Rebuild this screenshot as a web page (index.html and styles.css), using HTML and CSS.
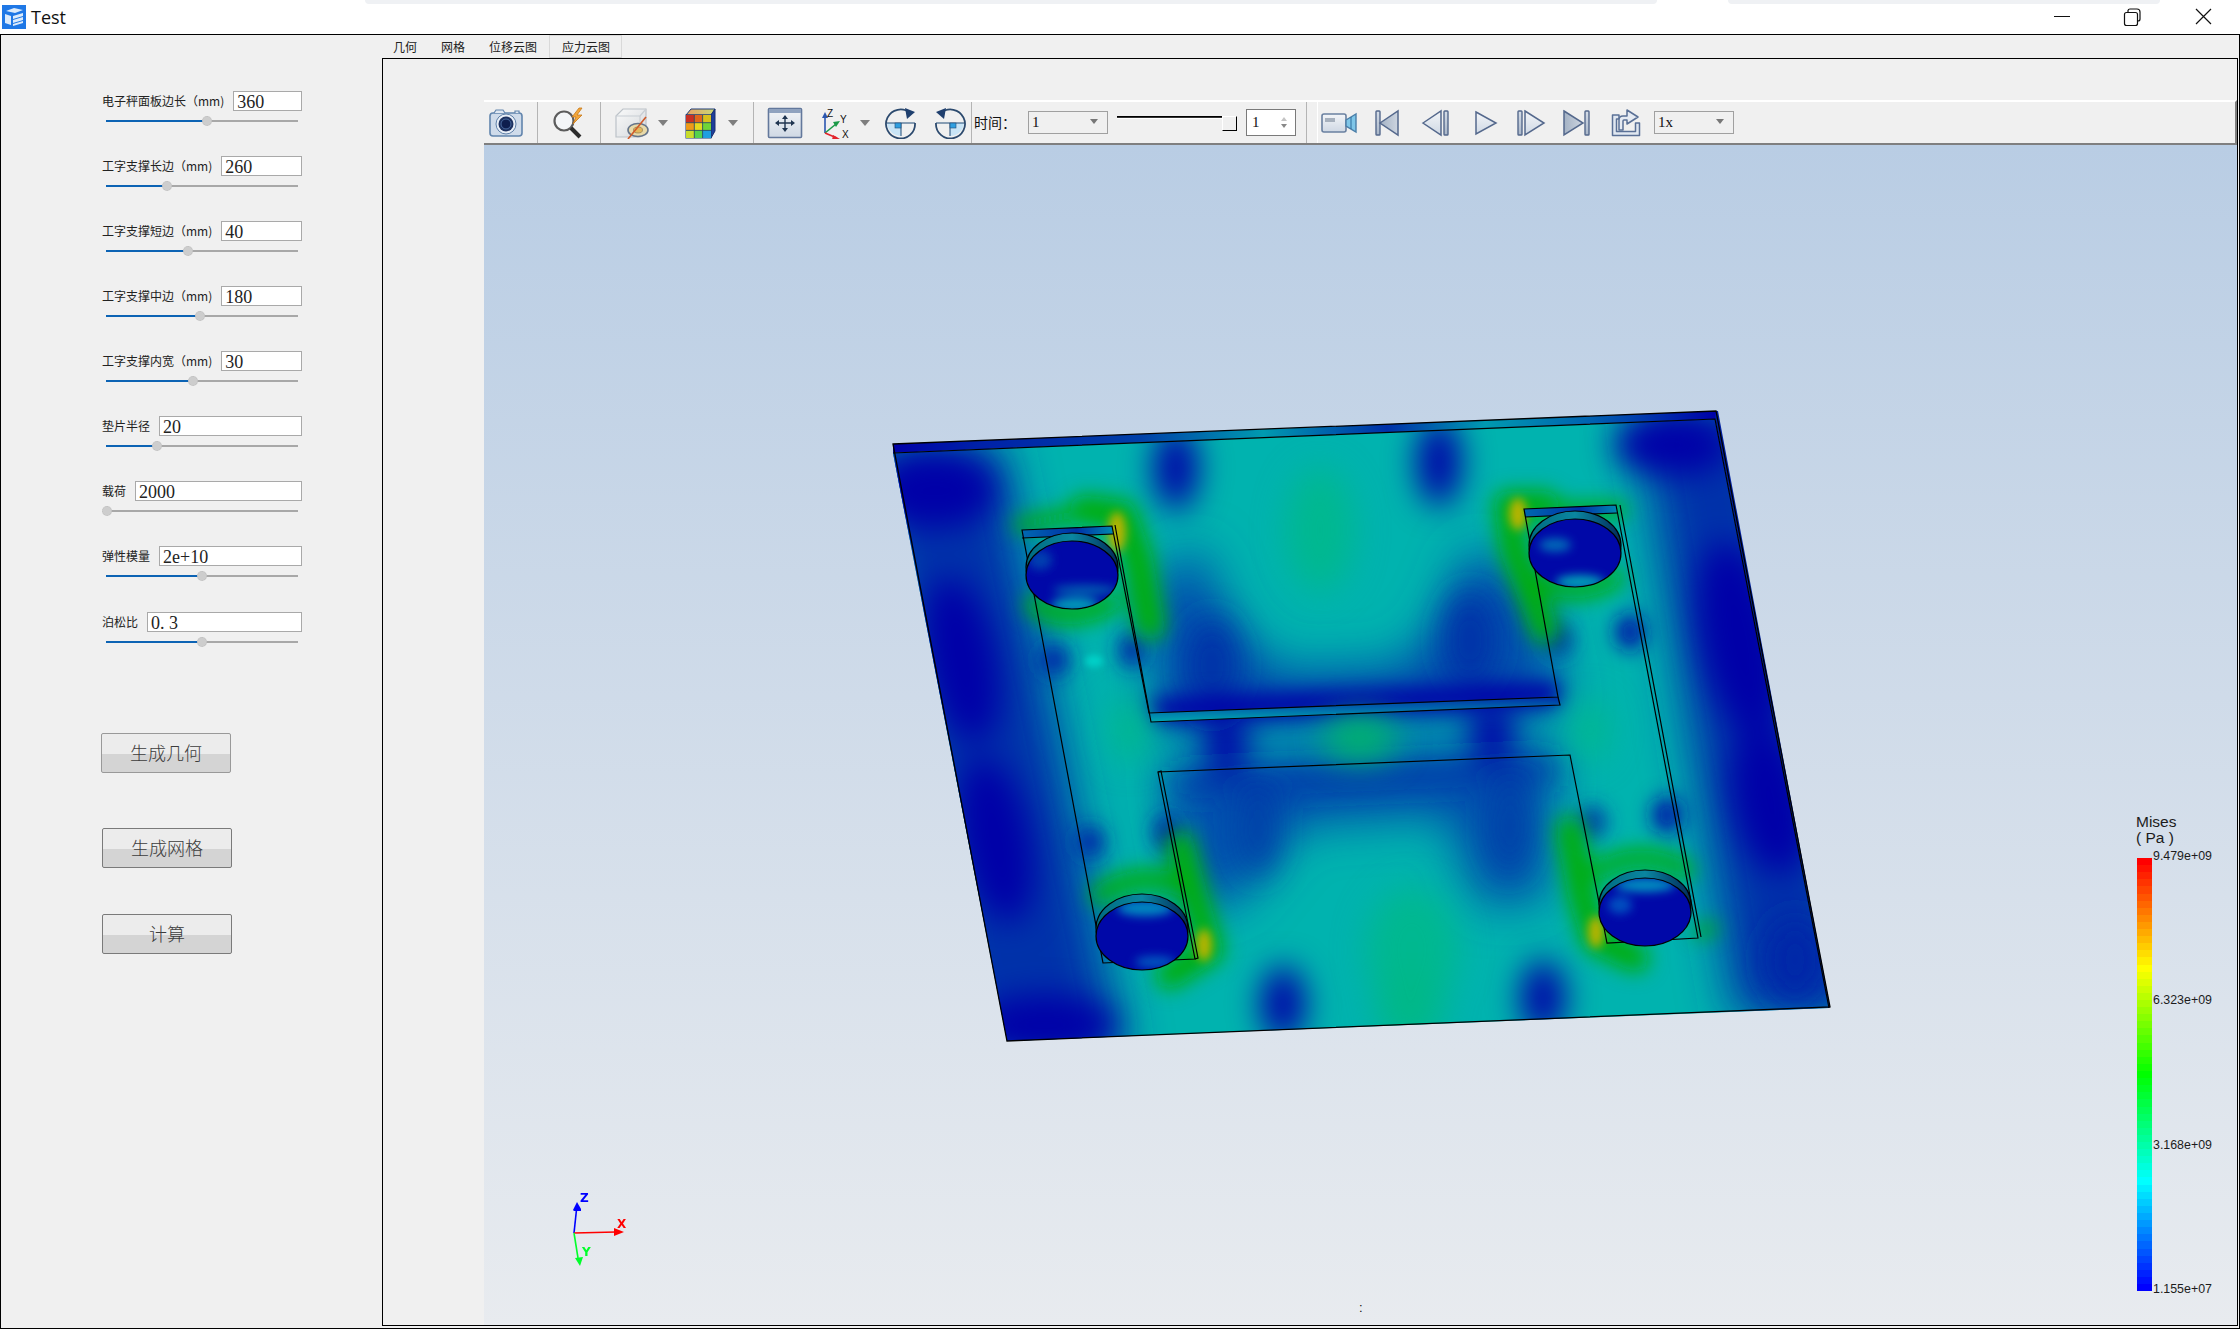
FILE: index.html
```html
<!DOCTYPE html>
<html lang="zh">
<head>
<meta charset="utf-8">
<title>Test</title>
<link rel="stylesheet" href="styles.css">
</head>
<body>
<svg class="defs" width="0" height="0" aria-hidden="true">
  <defs>
    <linearGradient id="pl" x1="0" y1="0" x2="0" y2="1"><stop offset="0" stop-color="#d5dde8"/><stop offset="1" stop-color="#a9b6c8"/></linearGradient>
    <linearGradient id="pd" x1="0" y1="0" x2="1" y2="0"><stop offset="0" stop-color="#a4b2c4"/><stop offset="1" stop-color="#cdd5e0"/></linearGradient>
    <linearGradient id="ph" x1="0" y1="0" x2="0" y2="1"><stop offset="0" stop-color="#f3f5f8"/><stop offset="1" stop-color="#cfd8e4"/></linearGradient>
    <linearGradient id="cubeTop" x1="0" y1="0" x2="1" y2="0"><stop offset="0" stop-color="#e8a060"/><stop offset="1" stop-color="#c8d878"/></linearGradient>
    <linearGradient id="boxf" x1="0" y1="0" x2="1" y2="1"><stop offset="0" stop-color="#fafafa"/><stop offset="1" stop-color="#d4d8dc"/></linearGradient>
  </defs>
</svg>
<div class="window">
  <header class="titlebar">
    <svg class="appicon" viewBox="0 0 24 24"><rect width="24" height="24" fill="#1f78e6"/><path d="M4 6 L12 3 L21 5 L13 8Z M3 9 L9 11 V20 L3 18Z M11 11 L21 8 V11 L11 14Z M11 15 L21 12 V15 L11 18Z M11 19 L21 16 V18 L11 21Z" fill="#dcebfb"/></svg>
    <span class="apptitle">Test</span>
    <span class="shade shade-a"></span>
    <span class="shade shade-b"></span>
    <div class="winctl">
      <svg class="ctl" viewBox="0 0 46 34"><path d="M15 16.5H31" stroke="#111" stroke-width="1" fill="none"/></svg>
      <svg class="ctl" viewBox="0 0 46 34"><path d="M16.5 12.5h9a2 2 0 0 1 2 2v9a2 2 0 0 1-2 2h-9a2 2 0 0 1-2-2v-9a2 2 0 0 1 2-2z M18 12v-1.5a2 2 0 0 1 2-1.5h7a3 3 0 0 1 3 3v7a2 2 0 0 1-2 2" stroke="#111" stroke-width="1.2" fill="none"/></svg>
      <svg class="ctl" viewBox="0 0 46 34"><path d="M15 9L30 24M30 9L15 24" stroke="#111" stroke-width="1.2" fill="none"/></svg>
    </div>
  </header>

  <div class="client">
    <aside class="side">
      <div class="row"><div class="field"><span class="lbl">电子秤面板边长（mm)</span><div class="num">360</div></div><div class="track"><div class="fill" style="width:101px"><i class="knob"></i></div></div></div>
      <div class="row"><div class="field"><span class="lbl">工字支撑长边（mm)</span><div class="num">260</div></div><div class="track"><div class="fill" style="width:61px"><i class="knob"></i></div></div></div>
      <div class="row"><div class="field"><span class="lbl">工字支撑短边（mm)</span><div class="num">40</div></div><div class="track"><div class="fill" style="width:82px"><i class="knob"></i></div></div></div>
      <div class="row"><div class="field"><span class="lbl">工字支撑中边（mm)</span><div class="num">180</div></div><div class="track"><div class="fill" style="width:94px"><i class="knob"></i></div></div></div>
      <div class="row"><div class="field"><span class="lbl">工字支撑内宽（mm)</span><div class="num">30</div></div><div class="track"><div class="fill" style="width:87px"><i class="knob"></i></div></div></div>
      <div class="row"><div class="field"><span class="lbl">垫片半径</span><div class="num">20</div></div><div class="track"><div class="fill" style="width:51px"><i class="knob"></i></div></div></div>
      <div class="row"><div class="field"><span class="lbl">载荷</span><div class="num">2000</div></div><div class="track"><div class="fill" style="width:1px"><i class="knob"></i></div></div></div>
      <div class="row"><div class="field"><span class="lbl">弹性模量</span><div class="num">2e+10</div></div><div class="track"><div class="fill" style="width:96px"><i class="knob"></i></div></div></div>
      <div class="row row-last"><div class="field"><span class="lbl">泊松比</span><div class="num">0. 3</div></div><div class="track"><div class="fill" style="width:96px"><i class="knob"></i></div></div></div>
      <button class="btn btn-geo">生成几何</button>
      <button class="btn btn-mesh">生成网格</button>
      <button class="btn btn-calc">计算</button>
    </aside>

    <section class="tabs">
      <nav class="tabbar">
        <span class="tab tab-1">几何</span>
        <span class="tab tab-2">网格</span>
        <span class="tab tab-3">位移云图</span>
        <span class="tab tab-on">应力云图</span>
      </nav>
      <div class="pane">
        <div class="toolbar">
          <svg class="tool ml-0" viewBox="0 0 36 32"><rect x="2" y="6" width="32" height="23" rx="3" fill="#cfdbea" stroke="#6285ad" stroke-width="1.6"/><path d="M6 6l2-3h7l2 3M27 6v-2h4v2" fill="#dfe7f1" stroke="#6285ad" stroke-width="1.2"/><circle cx="18" cy="17" r="10" fill="#e8eef6" stroke="#5f80a8"/><circle cx="18" cy="17" r="7.5" fill="#1d3160"/><circle cx="18" cy="17" r="5" fill="#0e1e4e" stroke="#4a6ba0"/></svg>
          <span class="sep ml-13"></span>
          <svg class="tool ml-14" viewBox="0 0 36 32"><circle cx="12" cy="14" r="9.5" fill="#f4f6f8" stroke="#5c5c5c" stroke-width="2.2"/><path d="M19 21l9 9" stroke="#2c2c2c" stroke-width="4"/><path d="M27 1l-7 9h4l-3 7 9-9h-5l5-7z" fill="#f3a73b" stroke="#c87a1a" stroke-width=".8"/></svg>
          <span class="sep ml-12"></span>
          <svg class="tool ml-13" viewBox="0 0 36 32"><path d="M2 9L9 2H32V22L26 30H2Z" fill="url(#boxf)" stroke="#bcc2c8" stroke-width="1.2"/><path d="M2 9H26V30M26 9L32 2" fill="none" stroke="#c8cdd3" stroke-width="1.2"/><ellipse cx="24" cy="23" rx="10" ry="6.5" fill="#e8d9a8" stroke="#66758a" stroke-width="1.6"/><ellipse cx="24" cy="23" rx="4.5" ry="3" fill="#e3b85c" stroke="#8b7a50" stroke-width=".7"/><path d="M14 32L32 10" stroke="#d05a28" stroke-width="1.6"/></svg>
          <svg class="drop ml-6" viewBox="0 0 14 8"><path d="M2 1H12L7 7Z" fill="#7e7e7e"/></svg>
          <svg class="tool ml-12" viewBox="0 0 36 32"><path d="M9 2H33L29 8H4Z" fill="url(#cubeTop)" stroke="#1f3c78"/><path d="M29 8L33 2V24L29 31Z" fill="#1f3f9c" stroke="#1a2f6e"/><rect x="4" y="8" width="25" height="23" fill="#3cc2c0" stroke="#1f3c78"/><rect x="4" y="8" width="8.3" height="7.7" fill="#c83024"/><rect x="12.3" y="8" width="8.3" height="7.7" fill="#e0661c"/><rect x="20.6" y="8" width="8.4" height="7.7" fill="#d8c01c"/><rect x="4" y="15.7" width="8.3" height="7.7" fill="#ee9a18"/><rect x="12.3" y="15.7" width="8.3" height="7.7" fill="#e6d81e"/><rect x="20.6" y="15.7" width="8.4" height="7.7" fill="#70d438"/><rect x="4" y="23.4" width="8.3" height="7.6" fill="#c8dc2c"/><rect x="12.3" y="23.4" width="8.3" height="7.6" fill="#54d24e"/><rect x="20.6" y="23.4" width="8.4" height="7.6" fill="#1f9fe0"/><path d="M12.3 8V31M20.6 8V31M4 15.7H29M4 23.4H29" stroke="#27405f" stroke-width=".8"/></svg>
          <svg class="drop ml-8" viewBox="0 0 14 8"><path d="M2 1H12L7 7Z" fill="#7e7e7e"/></svg>
          <span class="sep ml-13"></span>
          <svg class="tool ml-13" viewBox="0 0 36 32"><rect x="1.5" y="1.5" width="33" height="29" rx="1" fill="url(#ph)" stroke="#63789c" stroke-width="1.6"/><rect x="2" y="2" width="32" height="4" fill="#8fa2bf"/><path d="M18 9v14M11 16h14" stroke="#1f3450" stroke-width="1.4"/><path d="M18 8l-3 4h6zM18 25l-3-4h6zM8 16l4-3v6zM28 16l-4-3v6z" fill="#1f3450"/></svg>
          <svg class="tool ml-15" viewBox="0 0 36 32"><path d="M7 26V9" stroke="#2a56b0" stroke-width="1.6"/><path d="M7 5l-3 6h6z" fill="#2a56b0"/><path d="M7 26L18 17" stroke="#1c9a48" stroke-width="1.6"/><path d="M22 14l-7 1 3 5z" fill="#1c9a48"/><path d="M7 26l12 5" stroke="#e2242c" stroke-width="1.6"/><path d="M22 32l-7-4-1 5z" fill="#e2242c"/><text x="9" y="10" class="axl">Z</text><text x="22" y="16" class="axl">Y</text><text x="24" y="31" class="axl">X</text></svg>
          <svg class="drop ml-4" viewBox="0 0 14 8"><path d="M2 1H12L7 7Z" fill="#7e7e7e"/></svg>
          <svg class="tool ml-11" viewBox="0 0 36 32"><path d="M18 16V29A14 14 0 0 1 4 16Z" fill="#c8e4f6"/><path d="M4 16H32M18 16V29" stroke="#1f4a76" stroke-width="1"/><rect x="12" y="16" width="6" height="5" fill="#2f9fe0" stroke="#1f4a76" stroke-width=".6"/><path d="M27 6A14.5 14.5 0 1 0 32 16" fill="none" stroke="#2c4a6e" stroke-width="1.8"/><path d="M22 1L32 5L24 12Z" fill="#1f3f6e"/></svg>
          <svg class="tool ml-13" viewBox="0 0 36 32"><path d="M18 16V29A14 14 0 0 0 32 16Z" fill="#c8e4f6"/><path d="M4 16H32M18 16V29" stroke="#1f4a76" stroke-width="1"/><rect x="18" y="16" width="6" height="5" fill="#2f9fe0" stroke="#1f4a76" stroke-width=".6"/><path d="M9 6A14.5 14.5 0 1 1 4 16" fill="none" stroke="#2c4a6e" stroke-width="1.8"/><path d="M14 1L4 5L12 12Z" fill="#1f3f6e"/></svg>
          <span class="sep ml-3"></span>
          <span class="timelbl ml-2">时间：</span>
          <div class="combo ml-11"><span>1</span><i class="caret"></i></div>
          <div class="hslider ml-9"><i class="hgroove"></i><i class="hhandle"></i></div>
          <div class="spin ml-9"><span>1</span><span class="arrows"><i class="up"></i><i class="down"></i></span></div>
          <span class="sep ml-10"></span>
          <span class="sep-light ml-10"></span>
          <svg class="tool ml-3" viewBox="0 0 36 32"><rect x="1" y="7" width="24" height="18" rx="2" fill="url(#ph)" stroke="#6a80a0" stroke-width="1.6"/><rect x="4" y="11" width="10" height="4" fill="#a6b0bd"/><path d="M25 13l10-6v18l-10-6z" fill="#7fc6e8" stroke="#4a7ea8" stroke-width="1.4"/><path d="M30 10v12" stroke="#2f6d9c" stroke-width="1"/></svg>
          <svg class="play ml-15" viewBox="0 0 30 30"><rect x="4" y="3" width="4" height="24" rx=".8" fill="url(#pl)" stroke="#54688c" stroke-width="1.4"/><path d="M8 15L26 3V27Z" fill="url(#pd)" stroke="#54688c" stroke-width="1.5"/></svg>
          <svg class="play ml-18" viewBox="0 0 30 30"><path d="M3 15L21 3V27Z" fill="url(#ph)" stroke="#54688c" stroke-width="1.5"/><rect x="24" y="3" width="4" height="24" rx=".8" fill="url(#pl)" stroke="#54688c" stroke-width="1.4"/></svg>
          <svg class="play ml-20" viewBox="0 0 30 30"><path d="M6 4L26 15L6 26Z" fill="url(#ph)" stroke="#54688c" stroke-width="1.5"/></svg>
          <svg class="play ml-16" viewBox="0 0 30 30"><rect x="2" y="3" width="4" height="24" rx=".8" fill="url(#pl)" stroke="#54688c" stroke-width="1.4"/><path d="M9 3L28 15L9 27Z" fill="url(#ph)" stroke="#54688c" stroke-width="1.5"/></svg>
          <svg class="play ml-16" viewBox="0 0 30 30"><path d="M2 3L21 15L2 27Z" fill="url(#pd)" stroke="#54688c" stroke-width="1.5"/><rect x="23" y="3" width="4" height="24" rx=".8" fill="url(#pl)" stroke="#54688c" stroke-width="1.4"/></svg>
          <svg class="share ml-18" viewBox="0 0 32 30"><path d="M9 7H2.5V27.5H29.5V15H25.5V23.5H6.5V11H9Z" fill="#e0e7f0" stroke="#5a7096" stroke-width="1.5" stroke-linejoin="round"/><path d="M9 22V12Q9 8 13 8H17V2L28 9L17 16V12H14Q13 12 13 13V22Z" fill="#e6ebf3" stroke="#5a7096" stroke-width="1.5" stroke-linejoin="round"/></svg>
          <div class="combo ml-12"><span>1x</span><i class="caret"></i></div>
        </div>

        <div class="viewer">
          <svg class="scene" viewBox="484 145 1753 1180">
            <defs>
              <clipPath id="face"><path d="M893 453L1715 419L1829 1008L1007 1041Z"/></clipPath>
              <clipPath id="c1"><ellipse cx="1072" cy="575" rx="46" ry="34"/></clipPath>
              <clipPath id="c2"><ellipse cx="1575" cy="553" rx="46" ry="34"/></clipPath>
              <clipPath id="c3"><ellipse cx="1142" cy="936" rx="46" ry="34"/></clipPath>
              <clipPath id="c4"><ellipse cx="1645" cy="912" rx="46" ry="34"/></clipPath>
              <filter id="b40" x="700" y="300" width="1300" height="900" filterUnits="userSpaceOnUse"><feGaussianBlur stdDeviation="24"/></filter>
              <filter id="b20" x="700" y="300" width="1300" height="900" filterUnits="userSpaceOnUse"><feGaussianBlur stdDeviation="16"/></filter>
              <filter id="b10" x="700" y="300" width="1300" height="900" filterUnits="userSpaceOnUse"><feGaussianBlur stdDeviation="10"/></filter>
              <filter id="b5" x="700" y="300" width="1300" height="900" filterUnits="userSpaceOnUse"><feGaussianBlur stdDeviation="5"/></filter>
              <filter id="b3" x="700" y="300" width="1300" height="900" filterUnits="userSpaceOnUse"><feGaussianBlur stdDeviation="3"/></filter>
              <linearGradient id="topstrip" x1="893" y1="0" x2="1716" y2="0" gradientUnits="userSpaceOnUse">
                <stop offset="0" stop-color="#0000a8"/><stop offset=".1" stop-color="#0020a8"/><stop offset=".3" stop-color="#0040a8"/><stop offset=".45" stop-color="#009ab0"/><stop offset=".6" stop-color="#0030a8"/><stop offset=".72" stop-color="#009ab0"/><stop offset=".85" stop-color="#0060b0"/><stop offset="1" stop-color="#0000a8"/>
              </linearGradient>
              <linearGradient id="slotstrip" x1="0" y1="0" x2="0" y2="1"><stop offset="0" stop-color="#0030a8"/><stop offset="1" stop-color="#00a8b0"/></linearGradient>
              <linearGradient id="padstrip" x1="0" y1="0" x2="1" y2="0"><stop offset="0" stop-color="#0068b0"/><stop offset=".6" stop-color="#0030a8"/><stop offset="1" stop-color="#0088b0"/></linearGradient>
              <linearGradient id="dish" x1="0" y1="0" x2="1" y2="0"><stop offset="0" stop-color="#006a80"/><stop offset=".5" stop-color="#0a86a0"/><stop offset="1" stop-color="#032a5a"/></linearGradient>
            </defs>

            <path d="M893 444L1716 411L1717 419L893 453Z" fill="url(#topstrip)"/>
            <path d="M1716 411L1718 411L1830 1007L1829 1008L1715 419Z" fill="#0020a0"/>

            <g clip-path="url(#face)">
              <rect x="880" y="400" width="960" height="650" fill="#00b3af"/>

              <g filter="url(#b40)">
                <path d="M860 440H1000L1125 1060H960Z" fill="#0030aa"/>
                <path d="M1635 400H1760L1870 1020H1735Z" fill="#0030aa"/>
                <path d="M1155 735L1565 715L1540 590L1470 545L1440 620L1400 665L1280 670L1230 620L1200 545L1150 580Z" fill="#0050ae"/>
                <path d="M1165 770L1555 750L1545 900L1480 905L1445 815L1300 825L1235 905L1190 905Z" fill="#0050ae"/>
              </g>

              <g filter="url(#b20)" fill="#0000a8">
                <ellipse cx="935" cy="490" rx="62" ry="38"/>
                <ellipse cx="962" cy="660" rx="34" ry="84" transform="rotate(-11 962 660)"/>
                <ellipse cx="996" cy="840" rx="34" ry="84" transform="rotate(-11 996 840)"/>
                <ellipse cx="1045" cy="1025" rx="72" ry="30"/>
                <ellipse cx="1672" cy="445" rx="58" ry="30"/>
                <ellipse cx="1740" cy="640" rx="38" ry="100" transform="rotate(-11 1740 640)"/>
                <ellipse cx="1770" cy="800" rx="36" ry="76" transform="rotate(-11 1770 800)"/>
                <ellipse cx="1795" cy="960" rx="30" ry="44" fill="#0028a8"/>
                <ellipse cx="1176" cy="468" rx="22" ry="42"/>
                <ellipse cx="1439" cy="462" rx="22" ry="44"/>
                <ellipse cx="1283" cy="1004" rx="22" ry="38"/>
                <ellipse cx="1543" cy="998" rx="22" ry="38"/>
                <ellipse cx="1226" cy="742" rx="22" ry="32"/>
                <ellipse cx="1492" cy="732" rx="22" ry="32"/>
                <ellipse cx="1258" cy="830" rx="18" ry="46" fill="#0040a8"/>
                <ellipse cx="1510" cy="826" rx="18" ry="48" fill="#0040a8"/>
                <ellipse cx="1212" cy="665" rx="26" ry="48" fill="#0030a8"/>
                <ellipse cx="1470" cy="640" rx="26" ry="50" fill="#0030a8"/>
                <path d="M1170 785L1560 768" stroke="#0028a8" stroke-width="18" fill="none"/>
              </g>

              <g filter="url(#b10)">
                <path d="M1150 710L1560 693" stroke="#0000a8" stroke-width="24" fill="none"/>
                <ellipse cx="1054" cy="660" rx="15" ry="16" fill="#0028a8"/>
                <ellipse cx="1132" cy="650" rx="13" ry="18" fill="#0028a8"/>
                <ellipse cx="1090" cy="842" rx="14" ry="16" fill="#0028a8"/>
                <ellipse cx="1167" cy="832" rx="13" ry="18" fill="#0028a8"/>
                <ellipse cx="1558" cy="640" rx="14" ry="16" fill="#0038a8"/>
                <ellipse cx="1630" cy="632" rx="15" ry="18" fill="#0018a8"/>
                <ellipse cx="1592" cy="822" rx="14" ry="16" fill="#0038a8"/>
                <ellipse cx="1667" cy="815" rx="15" ry="18" fill="#0018a8"/>
              </g>

              <g filter="url(#b20)" fill="#00b890">
                <ellipse cx="1320" cy="530" rx="34" ry="62"/>
                <ellipse cx="1412" cy="950" rx="46" ry="62"/>
                <ellipse cx="1360" cy="738" rx="38" ry="24" fill="#00b070"/>
                <ellipse cx="1130" cy="730" rx="20" ry="32"/>
                <ellipse cx="1590" cy="730" rx="18" ry="32"/>
                <ellipse cx="1410" cy="1005" rx="34" ry="42" fill="#00b888"/>
              </g>

              <g filter="url(#b10)" fill="none" stroke="#00ae08" stroke-linecap="round" stroke-linejoin="round">
                <path d="M1020 525L1085 512" stroke-width="14"/>
                <path d="M1085 510L1122 515L1138 560L1150 625" stroke-width="30"/>
                <path d="M1035 605Q1070 625 1110 603" stroke-width="20"/>
                <path d="M1620 510L1545 510" stroke-width="14"/>
                <path d="M1545 505L1508 505L1514 550L1545 630" stroke-width="28"/>
                <path d="M1538 580Q1575 602 1615 578" stroke-width="18"/>
                <path d="M1100 895Q1140 868 1185 888" stroke-width="20"/>
                <path d="M1180 845L1198 910L1210 950L1170 975" stroke-width="28"/>
                <path d="M1600 870Q1640 846 1685 870" stroke-width="18"/>
                <path d="M1570 830L1582 895L1596 940L1635 958" stroke-width="28"/>
                <path d="M1700 932L1712 928" stroke-width="12"/>
              </g>
              <g filter="url(#b5)" fill="#b8b400">
                <ellipse cx="1117" cy="532" rx="9" ry="20"/>
                <ellipse cx="1518" cy="514" rx="9" ry="16"/>
                <ellipse cx="1204" cy="945" rx="8" ry="16"/>
                <ellipse cx="1596" cy="932" rx="8" ry="16"/>
              </g>
              <g filter="url(#b3)" fill="#00d0c8">
                <ellipse cx="1094" cy="661" rx="9" ry="6"/>
              </g>
            </g>

            <path d="M893 444L1716 411L1830 1007L1007 1041Z" fill="none" stroke="#000" stroke-width="1.3"/>
            <path d="M893 453L1715 419L1829 1008" fill="none" stroke="#000" stroke-width="1.2"/>

            <path d="M1022 530L1112 526L1113 534L1022 538Z" fill="url(#padstrip)"/>
            <path d="M1524 509L1616 505L1617 513L1525 517Z" fill="url(#padstrip)"/>
            <path d="M1149 713L1558 697L1560 705L1150 722Z" fill="url(#slotstrip)"/>

            <g fill="none" stroke="#000" stroke-width="1.2">
              <path d="M1022 530L1112 526L1149 713L1558 697L1524 509L1616 505L1698 938L1607 943L1570 755L1158 772L1195 959L1103 963Z"/>
              <path d="M1022 538L1113 534M1115 525L1151 722L1560 705L1558 697M1525 517L1617 513M1620 505L1701 937M1158 772L1161 771L1198 958L1195 959"/>
            </g>

            <g stroke="#000" stroke-width="1.2">
              <ellipse cx="1072" cy="567" rx="46" ry="34" fill="url(#dish)"/>
              <ellipse cx="1575" cy="545" rx="46" ry="34" fill="url(#dish)"/>
              <ellipse cx="1142" cy="928" rx="46" ry="34" fill="url(#dish)"/>
              <ellipse cx="1645" cy="904" rx="46" ry="34" fill="url(#dish)"/>
            </g>
            <g clip-path="url(#c1)">
              <rect x="1020" y="530" width="110" height="90" fill="#0008a8"/>
              <g filter="url(#b5)"><ellipse cx="1075" cy="605" rx="24" ry="7" fill="#00a0b8"/><ellipse cx="1085" cy="590" rx="32" ry="5" fill="#0060b0"/><ellipse cx="1040" cy="560" rx="12" ry="10" fill="#0040b0"/></g>
            </g>
            <g clip-path="url(#c2)">
              <rect x="1525" y="510" width="110" height="90" fill="#0008a8"/>
              <g filter="url(#b5)"><ellipse cx="1580" cy="582" rx="24" ry="7" fill="#00a0b8"/><ellipse cx="1555" cy="545" rx="16" ry="7" fill="#0068b8"/></g>
            </g>
            <g clip-path="url(#c3)">
              <rect x="1090" y="895" width="110" height="90" fill="#0008a8"/>
              <g filter="url(#b5)"><ellipse cx="1145" cy="908" rx="28" ry="8" fill="#0088c0"/><ellipse cx="1155" cy="962" rx="20" ry="6" fill="#0058c0"/></g>
            </g>
            <g clip-path="url(#c4)">
              <rect x="1595" y="870" width="110" height="90" fill="#0008a8"/>
              <g filter="url(#b5)"><ellipse cx="1645" cy="885" rx="30" ry="7" fill="#0090c0"/><ellipse cx="1620" cy="905" rx="12" ry="9" fill="#0050c0"/></g>
            </g>
            <g fill="none" stroke="#000" stroke-width="1.2">
              <ellipse cx="1072" cy="575" rx="46" ry="34"/>
              <ellipse cx="1575" cy="553" rx="46" ry="34"/>
              <ellipse cx="1142" cy="936" rx="46" ry="34"/>
              <ellipse cx="1645" cy="912" rx="46" ry="34"/>
            </g>

            <g class="triad">
              <path d="M574 1233L577 1205" stroke="#0000ff" stroke-width="1.6" fill="none"/>
              <path d="M577 1202L573 1210L574 1211H581L581 1209Z" fill="#0000ff"/>
              <path d="M574 1233L616 1232" stroke="#ff0000" stroke-width="1.6" fill="none"/>
              <path d="M624 1232L614 1228V1236Z" fill="#ff0000"/>
              <path d="M574 1233L578 1258" stroke="#00ff2a" stroke-width="1.6" fill="none"/>
              <path d="M580 1266L575 1258L583 1257Z" fill="#00ff2a"/>
              <text x="580" y="1202" class="tz">Z</text>
              <text x="617" y="1228" class="tx">X</text>
              <text x="582" y="1256" class="ty">Y</text>
            </g>
          </svg>

          <div class="legend">
            <div class="legend-title">Mises<br>( Pa )</div>
            <div class="legend-body">
              <div class="colorbar"></div>
              <div class="ticks"><span>9.479e+09</span><span>6.323e+09</span><span>3.168e+09</span><span>1.155e+07</span></div>
            </div>
          </div>
          <span class="status">:</span>
        </div>
      </div>
    </section>
  </div>
</div>
</body>
</html>
```
FILE: styles.css
```css
* { box-sizing: border-box; }
html, body { margin: 0; padding: 0; background: #fff; }
body { width: 2240px; height: 1330px; overflow: hidden; font-family: "Noto Sans CJK SC", "Liberation Sans", sans-serif; }
.defs { position: absolute; }
.window { width: 2240px; height: 1330px; display: flex; flex-direction: column; background: #fff; }

/* title bar */
.titlebar { position: relative; height: 34px; flex: none; display: flex; align-items: center; padding-left: 2px; background: #fff; }
.appicon { width: 24px; height: 24px; display: block; }
.apptitle { margin-left: 5px; font: 18px/34px "Open Sans", "Noto Sans", sans-serif; color: #111; }
.shade { position: absolute; top: 0; height: 4px; background: #eff1f4; border-radius: 0 0 8px 8px; }
.shade-a { left: 365px; width: 1292px; }
.shade-b { left: 1728px; width: 432px; }
.winctl { margin-left: auto; display: flex; align-items: flex-start; height: 34px; padding-right: 13px; }
.ctl { width: 46px; height: 34px; display: block; margin-left: 25px; }

/* client area */
.client { flex: none; height: 1295px; border: 1px solid #000; display: flex; background: #f0f0f0; }

/* left panel */
.side { width: 381px; flex: none; padding: 56px 0 0 101px; display: flex; flex-direction: column; align-items: flex-start; }
.row { width: 200px; height: 65px; flex: none; }
.row-last { margin-top: 1px; }
.field { display: flex; align-items: center; gap: 9px; height: 20px; }
.lbl { font-size: 12px; line-height: 20px; color: #222; white-space: nowrap; }
.num { flex: 1; height: 20px; background: #fff; border: 1px solid #a9a9a9; font: 18px/20px "Liberation Serif", serif; color: #222; padding-left: 3px; }
.track { position: relative; margin: 9px 0 0 4px; width: 192px; height: 2px; background: #a8a8a8; }
.fill { position: relative; height: 2px; background: #0c63b4; }
.knob { position: absolute; right: -5px; top: -4px; width: 10px; height: 10px; border-radius: 50%; background: #cdcdcd; border: 1px dotted #bdbdbd; }

.btn { display: block; width: 130px; height: 40px; flex: none; padding: 0 0 3px; border: 1px solid #7a7a7a; border-radius: 2px; background: linear-gradient(#ececec 0 52%, #d4d4d4 52% 100%); font: 300 18px/34px "Noto Sans CJK SC", sans-serif; color: #3c3c3c; }
.btn-geo { margin: 56px 0 0 -1px; border-color: #999; }
.btn-mesh { margin-top: 55px; }
.btn-calc { margin-top: 46px; }

/* tabs */
.tabs { flex: 1; min-width: 0; display: flex; flex-direction: column; margin: 0 1px 2px 0; }
.tabbar { height: 23px; flex: none; display: flex; align-items: stretch; font-size: 12px; color: #222; position: relative; }
.tab { line-height: 23px; white-space: nowrap; }
.tab-1 { margin-left: 11px; }
.tab-2 { margin-left: 24px; }
.tab-3 { margin-left: 24px; }
.tab-on { position: relative; margin-left: 12px; margin-bottom: -1px; padding: 0 11px 0 12px; height: 23px; background: #f0f0f0; border: 1px solid #d9d9d9; border-bottom-color: #cfcfcf; line-height: 21px; z-index: 1; }
.pane { flex: 1; min-height: 0; border: 1px solid #000; padding: 41px 0 0 101px; display: flex; flex-direction: column; }

/* toolbar */
.toolbar { height: 45px; flex: none; display: flex; align-items: center; padding-left: 4px; border-top: 2px solid #fff; border-bottom: 2px solid #7f7f7f; border-right: 2px solid #7f7f7f; background: #f0f0f0; }
.tool { width: 36px; height: 32px; flex: none; display: block; }
.drop { width: 14px; height: 8px; flex: none; display: block; }
.play { width: 30px; height: 30px; flex: none; display: block; }
.share { width: 32px; height: 30px; flex: none; display: block; }
.sep { width: 1px; height: 41px; flex: none; background: #b4b4b4; }
.sep-light { width: 1px; height: 41px; flex: none; background: #fff; }
.axl { font: 10px "Liberation Sans", sans-serif; fill: #111; }
.timelbl { width: 43px; font-size: 14px; line-height: 20px; padding-bottom: 2px; box-sizing: content-box; white-space: nowrap; color: #111; flex: none; }
.combo { width: 80px; height: 23px; flex: none; position: relative; border: 1px solid #a0a0a0; background: #f0f0f0; font: 15px/21px "Liberation Serif", serif; color: #111; padding-left: 3px; }
.caret { position: absolute; right: 9px; top: 7px; width: 0; height: 0; border: 4px solid transparent; border-top: 5px solid #777; border-bottom: 0; }
.hslider { position: relative; width: 120px; height: 20px; flex: none; }
.hgroove { position: absolute; left: 0; right: 0; top: 3px; height: 3px; border-top: 1px solid #000; border-bottom: 1px solid #fff; background: #333; }
.hhandle { position: absolute; right: 0; top: 3px; width: 15px; height: 15px; background: #f0f0f0; border-right: 1px solid #000; border-bottom: 1px solid #000; border-top: 1px solid #fff; border-left: 1px solid #fff; }
.spin { width: 50px; height: 27px; flex: none; border: 1px solid #7a7a7a; background: #fff; display: flex; align-items: center; justify-content: space-between; padding: 0 8px 0 5px; font: 15px/25px "Liberation Serif", serif; color: #111; }
.arrows { display: flex; flex-direction: column; gap: 3px; }
.up, .down { display: block; width: 0; height: 0; border: 3px solid transparent; }
.up { border-bottom: 4px solid #c4c4c4; border-top: 0; }
.down { border-top: 4px solid #888; border-bottom: 0; }

.ml-0 { margin-left: 0; } .ml-2 { margin-left: 2px; } .ml-3 { margin-left: 3px; } .ml-4 { margin-left: 4px; }
.ml-6 { margin-left: 6px; } .ml-8 { margin-left: 8px; } .ml-9 { margin-left: 9px; } .ml-10 { margin-left: 10px; }
.ml-11 { margin-left: 11px; } .ml-12 { margin-left: 12px; } .ml-13 { margin-left: 13px; } .ml-14 { margin-left: 14px; }
.ml-15 { margin-left: 15px; } .ml-16 { margin-left: 16px; } .ml-18 { margin-left: 18px; } .ml-20 { margin-left: 20px; }

/* 3D view */
.viewer { position: relative; flex: 1; min-height: 0; background: linear-gradient(#b9cde4, #e8ebef); }
.scene { display: block; width: 100%; height: 100%; }
.triad text { font: bold 12px "DejaVu Sans", sans-serif; }
.tz { fill: #0000ff; } .tx { fill: #ff0000; } .ty { fill: #00ff2a; }

.legend { position: absolute; left: 1652px; top: 668px; color: #1c1c1c; font-family: "Liberation Sans", sans-serif; }
.legend-title { font-size: 15.5px; line-height: 16px; height: 45px; padding-top: 1px; }
.legend-body { display: flex; align-items: flex-start; }
.colorbar { width: 15px; height: 433px; margin-left: 1px; flex: none;
  background: linear-gradient(#f00 7.1px,#f10 0 14.2px,#f20 0 21.3px,#f30 0 28.4px,#f40 0 35.5px,#f50 0 42.6px,#f60 0 49.7px,#f70 0 56.8px,#f80 0 63.9px,#f90 0 71px,#fa0 0 78.1px,#fb0 0 85.2px,#fc0 0 92.3px,#fd0 0 99.4px,#fe0 0 106.5px,#ff0 0 113.6px,#ef0 0 120.7px,#df0 0 127.8px,#cf0 0 134.9px,#bf0 0 142px,#af0 0 149.1px,#9f0 0 156.2px,#8f0 0 163.3px,#7f0 0 170.4px,#6f0 0 177.5px,#5f0 0 184.6px,#4f0 0 191.7px,#3f0 0 198.8px,#2f0 0 205.9px,#1f0 0 213px,#0f0 0 220.1px,#0f1 0 227.2px,#0f2 0 234.3px,#0f3 0 241.4px,#0f4 0 248.5px,#0f5 0 255.6px,#0f6 0 262.7px,#0f7 0 269.8px,#0f8 0 276.9px,#0f9 0 284px,#0fa 0 291.1px,#0fb 0 298.2px,#0fc 0 305.3px,#0fd 0 312.4px,#0fe 0 319.5px,#0ff 0 326.6px,#0ef 0 333.7px,#0df 0 340.8px,#0cf 0 347.9px,#0bf 0 355px,#0af 0 362.1px,#09f 0 369.2px,#08f 0 376.3px,#07f 0 383.4px,#06f 0 390.5px,#05f 0 397.6px,#04f 0 404.7px,#03f 0 411.8px,#02f 0 418.9px,#01f 0 426px,#00f 0 433px);
}
.ticks { height: 449px; margin: -10px 0 0 1px; display: flex; flex-direction: column; justify-content: space-between; font-size: 12.4px; line-height: 16px; }
.status { position: absolute; left: 875px; top: 1155px; font: 13px/16px "Liberation Sans", sans-serif; color: #111; }
```
